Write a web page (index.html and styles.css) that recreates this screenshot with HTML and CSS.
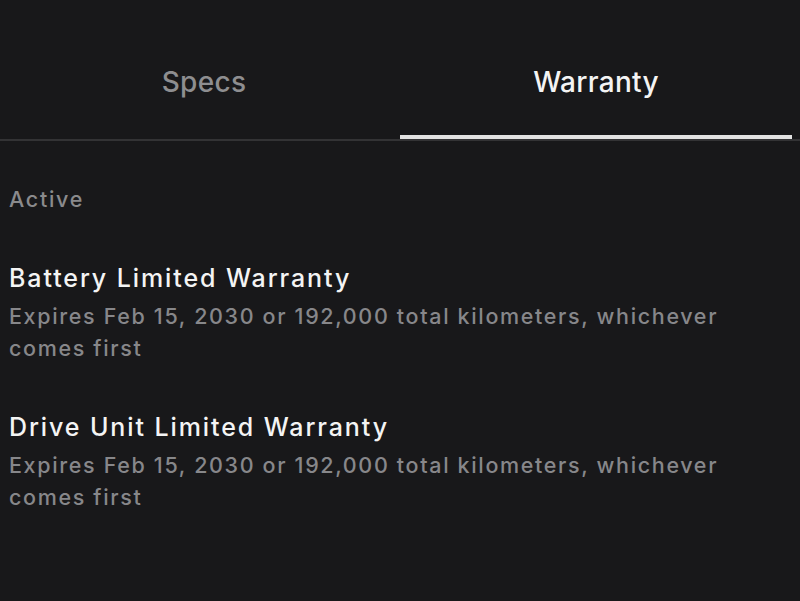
FILE: index.html
```html
<!DOCTYPE html>
<html lang="en">
<head>
<meta charset="utf-8">
<link rel="stylesheet" href="styles.css">
</head>
<body>
<div class="tabs">
  <div class="tab">Specs</div>
  <div class="tab active">Warranty</div>
</div>
<div class="content">
  <div class="section-label">Active</div>
  <div class="item">
    <div class="item-title">Battery Limited Warranty</div>
    <div class="item-desc">Expires Feb 15, 2030 or 192,000 total kilometers, whichever comes first</div>
  </div>
  <div class="item">
    <div class="item-title">Drive Unit Limited Warranty</div>
    <div class="item-desc">Expires Feb 15, 2030 or 192,000 total kilometers, whichever comes first</div>
  </div>
</div>
</body>
</html>
```
FILE: styles.css
```css
html, body {
  margin: 0;
  padding: 0;
  background: #18181a;
  width: 800px;
  height: 601px;
  overflow: hidden;
  font-family: Inter, "Noto Sans", sans-serif;
  -webkit-font-smoothing: antialiased;
}
.tabs {
  display: flex;
  padding: 0 8px;
  border-bottom: 2px solid #333335;
  height: 139px;
}
.tab {
  flex: 1;
  text-align: center;
  font-size: 28px;
  line-height: 34px;
  font-weight: 500;
  letter-spacing: 0.3px;
  color: #8e8e90;
  padding-top: 65px;
  border-bottom: 4px solid transparent;
  box-sizing: border-box;
}
.tab.active {
  color: #f4f4f4;
  border-bottom-color: #e2e2e2;
}
.content {
  padding: 43px 9px 0;
}
.section-label {
  font-size: 21.5px;
  font-weight: 500;
  letter-spacing: 1.7px;
  color: #8a8a8c;
  line-height: 30px;
  margin-bottom: 48px;
}
.item {
  margin-bottom: 47px;
}
.item-title {
  font-size: 25px;
  font-weight: 500;
  letter-spacing: 1.9px;
  color: #f4f4f4;
  line-height: 32px;
  margin-bottom: 6px;
}
.item-desc {
  font-size: 21.5px;
  font-weight: 500;
  letter-spacing: 1.65px;
  color: #87878a;
  line-height: 32px;
  width: 740px;
}
```
